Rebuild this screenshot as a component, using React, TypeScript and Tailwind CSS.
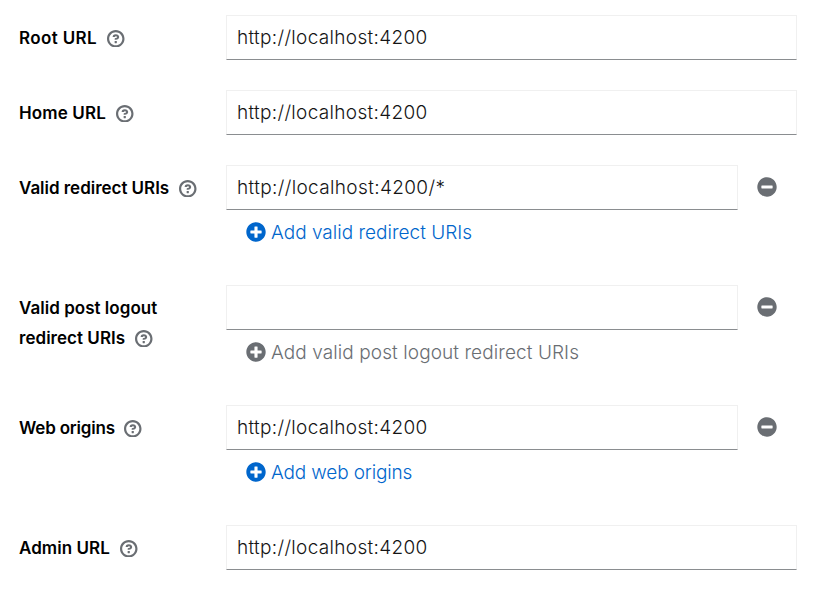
import React from "react";

function Help() {
  return (
    <svg className="mt-px ml-2.5 h-[17.5px] w-[17.5px] shrink-0" viewBox="0 0 1024 1024" fill="#6a6e73">
      <path d="M521.3 576C627.5 576 713.7 502 713.7 413.7C713.7 325.4 627.6 253.6 521.3 253.6C366 253.6 334.5 337.7 329.2 407.2C329.2 414.3 335.2 416 343.5 416L445 416C450.5 416 458 415.5 460.8 406.5C460.8 362.6 582.9 357.1 582.9 413.6C582.9 441.9 556.2 470.9 521.3 473C486.4 475.1 447.3 479.8 447.3 521.7L447.3 553.8C447.3 570.8 456.1 576 472 576ZM575.3 751.3L575.3 655.3C575.3 645.2 565 640 558.3 640L462.3 640C455.9 640 447.3 645.2 447.3 655.3L447.3 751.3C447.3 762.1 455.8 768 462.3 768L558.3 768C565 768 575.3 762.1 575.3 751.3ZM512 896C300.2 896 128 723.9 128 512C128 300.3 300.2 128 512 128C723.8 128 896 300.2 896 512C896 723.8 723.7 896 512 896ZM512.1 0C229.7 0 0 229.8 0 512C0 794.2 229.8 1024 512.1 1024C794.4 1024 1024 794.3 1024 512C1024 229.7 794.4 0 512.1 0Z" />
    </svg>
  );
}

function PlusCircle() {
  return (
    <svg className="mb-px h-5 w-5 shrink-0" viewBox="0 0 512 512" fill="currentColor">
      <path d="M256 8C119 8 8 119 8 256s111 248 248 248 248-111 248-248S393 8 256 8zm144 276c0 6.600-5.400 12-12 12h-92v92c0 6.600-5.400 12-12 12h-56c-6.600 0-12-5.400-12-12v-92h-92c-6.600 0-12-5.400-12-12v-56c0-6.600 5.400-12 12-12h92v-92c0-6.600 5.400-12 12-12h56c6.600 0 12 5.400 12 12v92h92c6.600 0 12 5.400 12 12v56z" />
    </svg>
  );
}

function MinusCircle() {
  return (
    <svg className="mb-px h-5 w-5" viewBox="0 0 512 512" fill="currentColor">
      <path d="M256 8C119 8 8 119 8 256s111 248 248 248 248-111 248-248S393 8 256 8zM124 296c-6.600 0-12-5.400-12-12v-56c0-6.600 5.400-12 12-12h264c6.600 0 12 5.400 12 12v56c0 6.600-5.400 12-12 12H124z" />
    </svg>
  );
}

type Row = {
  lines: { text: string; fit: string }[];
  value: string;
  fit: string;
  add?: { text: string; fit: string; color: string };
};

const url = "http://localhost:4200";
const urlFit = "tracking-[0.32px]";

const rows: Row[] = [
  { lines: [{ text: "Root URL", fit: "w-[78px] tracking-[0.36px]" }], value: url, fit: urlFit },
  { lines: [{ text: "Home URL", fit: "w-[87px] tracking-[0.14px]" }], value: url, fit: urlFit },
  {
    lines: [{ text: "Valid redirect URIs", fit: "w-[150px] tracking-[-0.03px]" }],
    value: "http://localhost:4200/*",
    fit: "tracking-[0.36px]",
    add: { text: "Add valid redirect URIs", fit: "tracking-[0.01px]", color: "text-[#0066cc]" },
  },
  {
    lines: [
      { text: "Valid post logout", fit: "w-[138px] tracking-[0.03px]" },
      { text: "redirect URIs", fit: "w-[106px] tracking-[0.03px]" },
    ],
    value: "",
    fit: "",
    add: { text: "Add valid post logout redirect URIs", fit: "tracking-[0.09px]", color: "text-[#6a6e73]" },
  },
  {
    lines: [{ text: "Web origins", fit: "w-[95px] tracking-[-0.2px]" }],
    value: url,
    fit: urlFit,
    add: { text: "Add web origins", fit: "tracking-[-0.15px]", color: "text-[#0066cc]" },
  },
  { lines: [{ text: "Admin URL", fit: "w-[91px] tracking-[0.06px]" }], value: url, fit: urlFit },
];

export default function App() {
  return (
    <main className="h-[604px] w-[821px] bg-white pt-[15px] pl-[19px] font-['Inter',sans-serif] whitespace-nowrap text-[#151515]">
      {rows.map((row, i) => (
        <section key={i} className={`flex ${row.add ? "h-[120px]" : "h-[75px]"}`}>
          <div className="w-[207px] shrink-0 pt-2 text-[17px] leading-[30px] font-semibold text-black">
            {row.lines.map((line, j) => (
              <div key={line.text} className="flex h-[30px] items-center">
                <span className={line.fit}>{line.text}</span>
                {j === row.lines.length - 1 && <Help />}
              </div>
            ))}
          </div>
          <div className="text-[19px] leading-[30px] font-light">
            <div className="flex items-center">
              <div className={`flex h-[45px] items-center border border-[#f0f0f0] border-b-[#8a8d90] pl-[10px] ${row.add ? "w-[512px]" : "w-[571px]"}`}>
                <span className={row.fit}>{row.value}</span>
              </div>
              {row.add && (
                <button className="ml-[19px] text-[#6a6e73]" aria-label="Remove">
                  <MinusCircle />
                </button>
              )}
            </div>
            {row.add && (
              <button className={`flex h-[45px] items-center gap-[5px] pl-5 ${row.add.color}`}>
                <PlusCircle />
                <span className={row.add.fit}>{row.add.text}</span>
              </button>
            )}
          </div>
        </section>
      ))}
    </main>
  );
}
